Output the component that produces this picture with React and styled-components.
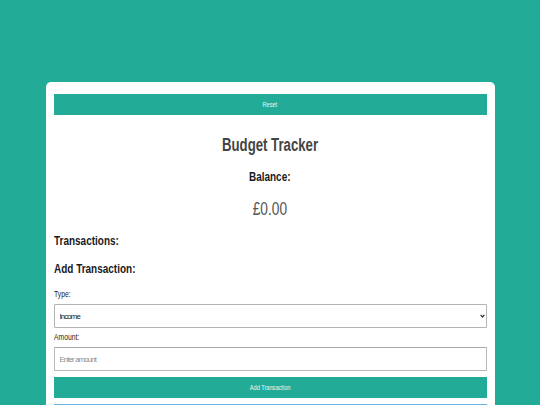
import React from "react";
import styled, { createGlobalStyle } from "styled-components";

const FONT = `"Liberation Sans", Arial, sans-serif`;

const Global = createGlobalStyle`
  html, body { margin: 0; padding: 0; background: #22ab97; }
  body { font-family: ${FONT}; }
  * { box-sizing: border-box; }
`;

const Page = styled.div`
  height: 405px;
  background: #22ab97;
  padding-top: 82px;
  overflow: hidden;
`;

const Card = styled.div`
  width: 449px;
  margin: 0 auto;
  background: #ffffff;
  border-radius: 5px;
  padding: 12px 8px 20px;
  display: flex;
  flex-direction: column;
`;

/* the reference text is drawn horizontally condensed */
const Narrow = styled.span`
  display: inline-block;
  white-space: nowrap;
  transform: scaleX(0.75);
  transform-origin: ${(p) => (p.$left ? "left center" : "center center")};
`;

const Button = styled.button`
  display: block;
  width: 100%;
  height: 21px;
  border: none;
  background: #22ab97;
  color: #eaf8f4;
  font-family: ${FONT};
  font-size: 7.5px;
  line-height: 21px;
  padding: 0;
  margin-top: ${(p) => p.$mt || 0}px;
  cursor: pointer;
`;

const Title = styled.h1`
  margin: 20px 0 0;
  font-size: 17.6px;
  line-height: 20px;
  font-weight: 700;
  color: #444;
  text-align: center;
`;

const Heading = styled.h2`
  margin: ${(p) => p.$mt}px 0 0;
  font-size: 13.3px;
  line-height: 16px;
  font-weight: 700;
  color: #1a1a1a;
  text-align: ${(p) => (p.$center ? "center" : "left")};
`;

const Amount = styled.div`
  margin-top: 13px;
  font-size: 18.3px;
  line-height: 22px;
  color: #555;
  text-align: center;
`;

const Label = styled.label`
  display: block;
  margin-top: ${(p) => p.$mt}px;
  margin-bottom: 4px;
  font-size: 9px;
  line-height: 11px;
  color: #222;
`;

const SelectWrap = styled.div`
  position: relative;
  width: 100%;
`;

const Select = styled.select`
  appearance: none;
  -webkit-appearance: none;
  display: block;
  width: 100%;
  height: 24px;
  border: 1px solid #b3b3b3;
  border-radius: 1px;
  background: #fff;
  padding: 0 5px;
  font-family: ${FONT};
  font-size: 7.7px;
  letter-spacing: -0.8px;
  color: #111;
  outline: none;
`;

const Chevron = styled.svg`
  position: absolute;
  right: 2px;
  top: 9.5px;
  width: 5px;
  height: 4px;
  pointer-events: none;
`;

const Input = styled.input`
  display: block;
  width: 100%;
  height: 24px;
  border: 1px solid #b8b8b8;
  border-top-color: #a9a9a9;
  border-radius: 1px;
  background: #fff;
  padding: 0 5px;
  font-family: ${FONT};
  font-size: 7.7px;
  letter-spacing: -0.8px;
  color: #111;
  outline: none;
  &::placeholder { color: #8a8a8a; }
`;

const List = styled.div`
  margin-top: 6px;
  height: 30px;
  border: 1px solid #6bb6e6;
`;

export default function App() {
  return (
    <>
      <Global />
      <Page>
        <Card>
          <Button><Narrow>Reset</Narrow></Button>
          <Title><Narrow>Budget Tracker</Narrow></Title>
          <Heading $mt={14} $center><Narrow>Balance:</Narrow></Heading>
          <Amount><Narrow>£0.00</Narrow></Amount>
          <Heading $mt={13}><Narrow $left>Transactions:</Narrow></Heading>
          <Heading $mt={12}><Narrow $left>Add Transaction:</Narrow></Heading>
          <Label $mt={12}><Narrow $left>Type:</Narrow></Label>
          <SelectWrap>
            <Select defaultValue="income">
              <option value="income">Income</option>
              <option value="expense">Expense</option>
            </Select>
            <Chevron viewBox="0 0 5 4">
              <path d="M0.6 0.8 L2.5 3 L4.4 0.8" fill="none" stroke="#333" strokeWidth="1.3" />
            </Chevron>
          </SelectWrap>
          <Label $mt={4}><Narrow $left>Amount:</Narrow></Label>
          <Input placeholder="Enter amount" />
          <Button $mt={6}><Narrow>Add Transaction</Narrow></Button>
          <List />
        </Card>
      </Page>
    </>
  );
}
